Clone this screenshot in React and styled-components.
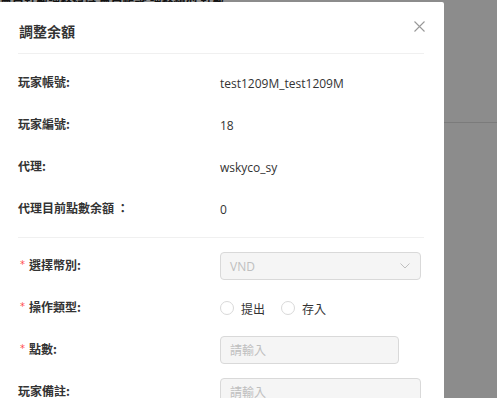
import React from 'react';
import styled, { createGlobalStyle } from 'styled-components';

const GlobalStyle = createGlobalStyle`
  html, body {
    margin: 0;
    height: 100%;
    overflow: hidden;
  }
  body {
    font-family: "Open Sans", "Noto Sans CJK TC", sans-serif;
    color: #333;
  }
`;

const Page = styled.div`
  position: relative;
  height: 100vh;
  background: #fff;
  overflow: hidden;
`;

const PageTop = styled.div`
  height: 2px;
  overflow: hidden;
  display: flex;
  align-items: flex-end;
`;

const PageTopText = styled.div`
  font-family: "Noto Sans CJK TC", sans-serif;
  font-size: 12px;
  font-weight: 700;
  line-height: 12px;
  margin-bottom: -6px;
  color: #222;
  white-space: nowrap;
`;

const PageRule = styled.div`
  margin-top: 120px;
  height: 1px;
  background: #e0e0e0;
`;

const Overlay = styled.div`
  position: fixed;
  inset: 0;
  background: rgba(0, 0, 0, 0.45);
`;

const Modal = styled.div`
  position: absolute;
  top: 2px;
  left: -2px;
  width: 446px;
  background: #fff;
  border-radius: 2px;
  padding-bottom: 24px;
`;

const Header = styled.div`
  display: flex;
  justify-content: space-between;
  align-items: flex-start;
  padding: 18px 19px 11px 21px;
`;

const Title = styled.div`
  font-family: "Noto Sans CJK TC", sans-serif;
  font-size: 14px;
  font-weight: 700;
  line-height: 22px;
  color: #333;
`;

const CloseButton = styled.button`
  border: 0;
  background: none;
  padding: 0;
  margin-top: 1px;
  width: 11px;
  height: 11px;
  display: flex;
  cursor: pointer;
`;

const Rule = styled.div`
  height: 1px;
  background: #f0f0f0;
  margin: ${p => p.$margin || '0 20px'};
`;

const Body = styled.div`
  padding: 15px 20px 0;
  display: flex;
  flex-direction: column;
`;

const Rows = styled.div`
  display: flex;
  flex-direction: column;
  gap: 14px;
`;

const Row = styled.div`
  display: grid;
  grid-template-columns: 202px 1fr;
  align-items: center;
  height: 28px;
`;

const Label = styled.div`
  align-self: start;
  line-height: 25px;
  font-family: "Noto Sans CJK TC", sans-serif;
  font-size: 12px;
  font-weight: 700;
  color: #333;
  display: flex;
  align-items: center;
  white-space: pre;
`;

const Required = styled.span`
  color: #ff4d4f;
  font-family: "DejaVu Sans", sans-serif;
  font-size: 10px;
  font-weight: 400;
  margin: 0 4px 0 2px;
`;

const Value = styled.div`
  font-size: 12px;
  color: #333;
`;

const Field = styled.div`
  box-sizing: border-box;
  width: ${p => p.$width || '201px'};
  height: 28px;
  border: 1px solid #d9d9d9;
  border-radius: 4px;
  background: #f5f5f5;
  display: flex;
  align-items: center;
  justify-content: space-between;
  padding: 0 10px 0 9px;
  font-family: "Open Sans", "Noto Sans CJK TC", sans-serif;
  font-size: 12px;
  color: #bfbfbf;
`;

const RadioGroup = styled.div`
  display: flex;
  align-items: center;
`;

const RadioItem = styled.label`
  display: flex;
  align-items: center;
  margin-right: 8px;
  cursor: pointer;
`;

const RadioCircle = styled.span`
  box-sizing: border-box;
  width: 14px;
  height: 14px;
  border: 1px solid #d9d9d9;
  border-radius: 50%;
  background: #fff;
`;

const RadioText = styled.span`
  font-family: "Noto Sans CJK TC", sans-serif;
  font-size: 12px;
  color: #333;
  padding: 0 8px 0 7px;
`;

const Chevron = () => (
  <svg width="10" height="6" viewBox="0 0 10 6" fill="none">
    <path d="M0.5 0.5 L5 5 L9.5 0.5" stroke="#bfbfbf" strokeWidth="1" />
  </svg>
);

const CloseIcon = () => (
  <svg width="11" height="11" viewBox="0 0 11 11">
    <path d="M0.5 0.5 L10.5 10.5 M10.5 0.5 L0.5 10.5" stroke="#999" strokeWidth="1.1" />
  </svg>
);

const infoRows = [
  { label: '玩家帳號:', value: 'test1209M_test1209M' },
  { label: '玩家編號:', value: '18' },
  { label: '代理:', value: 'wskyco_sy' },
  { label: '代理目前點數余額 ：', value: '0' },
];

const App = () => (
  <>
    <GlobalStyle />
    <Page>
      <PageTop>
        <PageTopText>會員點數調整紀錄 會員帳號 調整類型 點數</PageTopText>
      </PageTop>
      <PageRule />
      <Overlay />
      <Modal>
        <Header>
          <Title>調整余額</Title>
          <CloseButton aria-label="close">
            <CloseIcon />
          </CloseButton>
        </Header>
        <Rule />
        <Body>
          <Rows>
            {infoRows.map(row => (
              <Row key={row.label}>
                <Label>{row.label}</Label>
                <Value>{row.value}</Value>
              </Row>
            ))}
          </Rows>
          <Rule $margin="14px 0 14px" />
          <Rows>
            <Row>
              <Label><Required>*</Required>選擇幣別:</Label>
              <Field>
                VND
                <Chevron />
              </Field>
            </Row>
            <Row>
              <Label><Required>*</Required>操作類型:</Label>
              <RadioGroup>
                <RadioItem>
                  <RadioCircle />
                  <RadioText>提出</RadioText>
                </RadioItem>
                <RadioItem>
                  <RadioCircle />
                  <RadioText>存入</RadioText>
                </RadioItem>
              </RadioGroup>
            </Row>
            <Row>
              <Label><Required>*</Required>點數:</Label>
              <Field $width="179px">請輸入</Field>
            </Row>
            <Row>
              <Label>玩家備註:</Label>
              <Field>請輸入</Field>
            </Row>
          </Rows>
        </Body>
      </Modal>
    </Page>
  </>
);

export default App;
